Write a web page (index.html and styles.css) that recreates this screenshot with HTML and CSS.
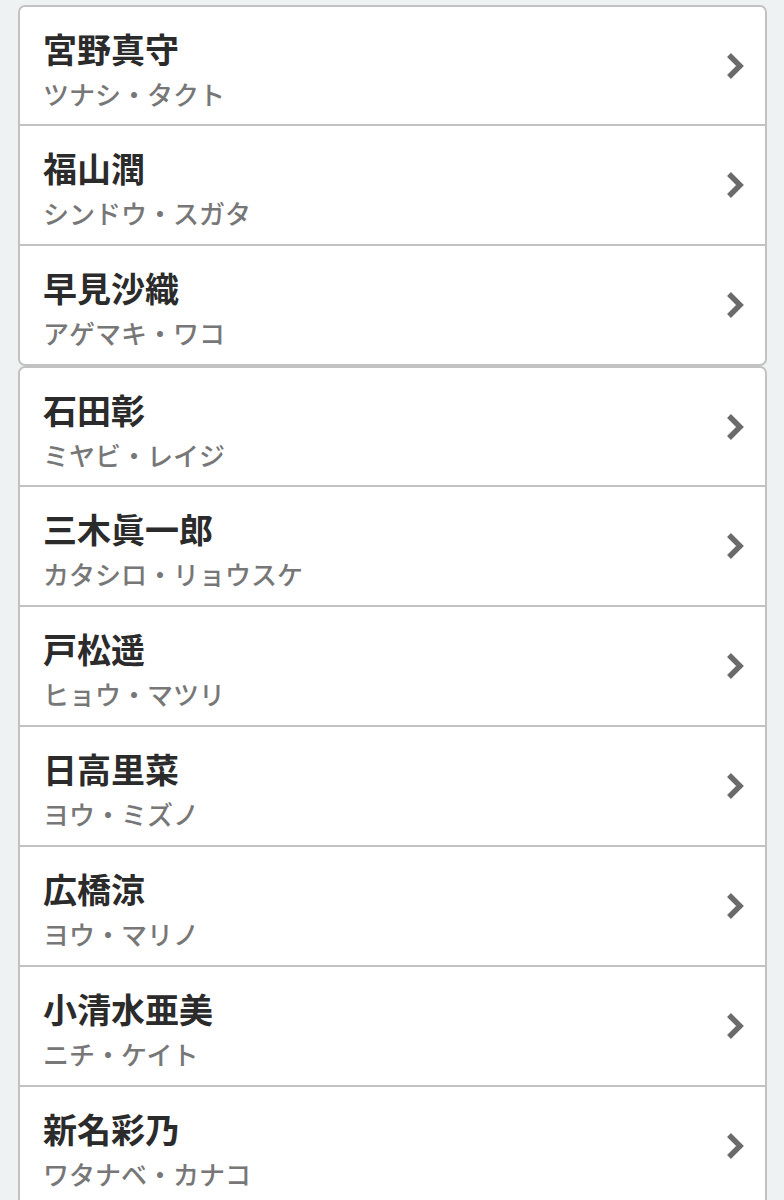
FILE: index.html
```html
<!DOCTYPE html>
<html lang="ja">
<head>
  <meta charset="UTF-8">
  <meta name="viewport" content="width=device-width, initial-scale=1.0">
  <title>キャスト一覧</title>
  <link rel="stylesheet" href="styles.css">
</head>
<body>

  <div class="container">

    <!-- メインキャスト -->
    <ul class="cast-list">
      <li class="cast-item">
        <div class="cast-text">
          <div class="cast-name">宮野真守</div>
          <div class="cast-role">ツナシ・タクト</div>
        </div>
        <svg class="chevron" viewBox="0 0 20 28"><polyline points="4,3 15,14 4,25"/></svg>
      </li>
      <li class="cast-item">
        <div class="cast-text">
          <div class="cast-name">福山潤</div>
          <div class="cast-role">シンドウ・スガタ</div>
        </div>
        <svg class="chevron" viewBox="0 0 20 28"><polyline points="4,3 15,14 4,25"/></svg>
      </li>
      <li class="cast-item">
        <div class="cast-text">
          <div class="cast-name">早見沙織</div>
          <div class="cast-role">アゲマキ・ワコ</div>
        </div>
        <svg class="chevron" viewBox="0 0 20 28"><polyline points="4,3 15,14 4,25"/></svg>
      </li>
    </ul>

    <!-- その他のキャスト -->
    <ul class="cast-list">
      <li class="cast-item">
        <div class="cast-text">
          <div class="cast-name">石田彰</div>
          <div class="cast-role">ミヤビ・レイジ</div>
        </div>
        <svg class="chevron" viewBox="0 0 20 28"><polyline points="4,3 15,14 4,25"/></svg>
      </li>
      <li class="cast-item">
        <div class="cast-text">
          <div class="cast-name">三木眞一郎</div>
          <div class="cast-role">カタシロ・リョウスケ</div>
        </div>
        <svg class="chevron" viewBox="0 0 20 28"><polyline points="4,3 15,14 4,25"/></svg>
      </li>
      <li class="cast-item">
        <div class="cast-text">
          <div class="cast-name">戸松遥</div>
          <div class="cast-role">ヒョウ・マツリ</div>
        </div>
        <svg class="chevron" viewBox="0 0 20 28"><polyline points="4,3 15,14 4,25"/></svg>
      </li>
      <li class="cast-item">
        <div class="cast-text">
          <div class="cast-name">日高里菜</div>
          <div class="cast-role">ヨウ・ミズノ</div>
        </div>
        <svg class="chevron" viewBox="0 0 20 28"><polyline points="4,3 15,14 4,25"/></svg>
      </li>
      <li class="cast-item">
        <div class="cast-text">
          <div class="cast-name">広橋涼</div>
          <div class="cast-role">ヨウ・マリノ</div>
        </div>
        <svg class="chevron" viewBox="0 0 20 28"><polyline points="4,3 15,14 4,25"/></svg>
      </li>
      <li class="cast-item">
        <div class="cast-text">
          <div class="cast-name">小清水亜美</div>
          <div class="cast-role">ニチ・ケイト</div>
        </div>
        <svg class="chevron" viewBox="0 0 20 28"><polyline points="4,3 15,14 4,25"/></svg>
      </li>
      <li class="cast-item">
        <div class="cast-text">
          <div class="cast-name">新名彩乃</div>
          <div class="cast-role">ワタナベ・カナコ</div>
        </div>
        <svg class="chevron" viewBox="0 0 20 28"><polyline points="4,3 15,14 4,25"/></svg>
      </li>
    </ul>

  </div>

</body>
</html>
```

FILE: styles.css
```css
body {
  font-family: "Noto Sans CJK JP", "Noto Sans", sans-serif;
  background-color: #eff2f3;
  margin: 0;
  padding: 0;
}

.container {
  padding: 5px 17px 0 18px;
}

.cast-list {
  list-style: none;
  margin: 0;
  padding: 0;
  background-color: #fff;
  border: 2px solid #c2c2c2;
  border-radius: 7px;
  overflow: hidden;
}

.cast-item {
  display: flex;
  align-items: center;
  height: 118px;
  padding: 0 20px 0 23px;
  border-bottom: 2px solid #c2c2c2;
}

.cast-item:first-child {
  height: 117px;
}

.cast-item:last-child {
  border-bottom: none;
}

.cast-text {
  flex: 1;
  align-self: flex-start;
  padding-top: 22px;
}

.cast-name {
  font-size: 34px;
  font-weight: bold;
  line-height: 40px;
  color: #2b2b2b;
}

.cast-role {
  font-size: 26px;
  font-weight: 500;
  line-height: 32px;
  margin-top: 9px;
  color: #777;
}

.chevron {
  width: 20px;
  height: 28px;
  fill: none;
  stroke: #6b6b6b;
  stroke-width: 5.5;
  stroke-linecap: butt;
  stroke-linejoin: miter;
}
```
